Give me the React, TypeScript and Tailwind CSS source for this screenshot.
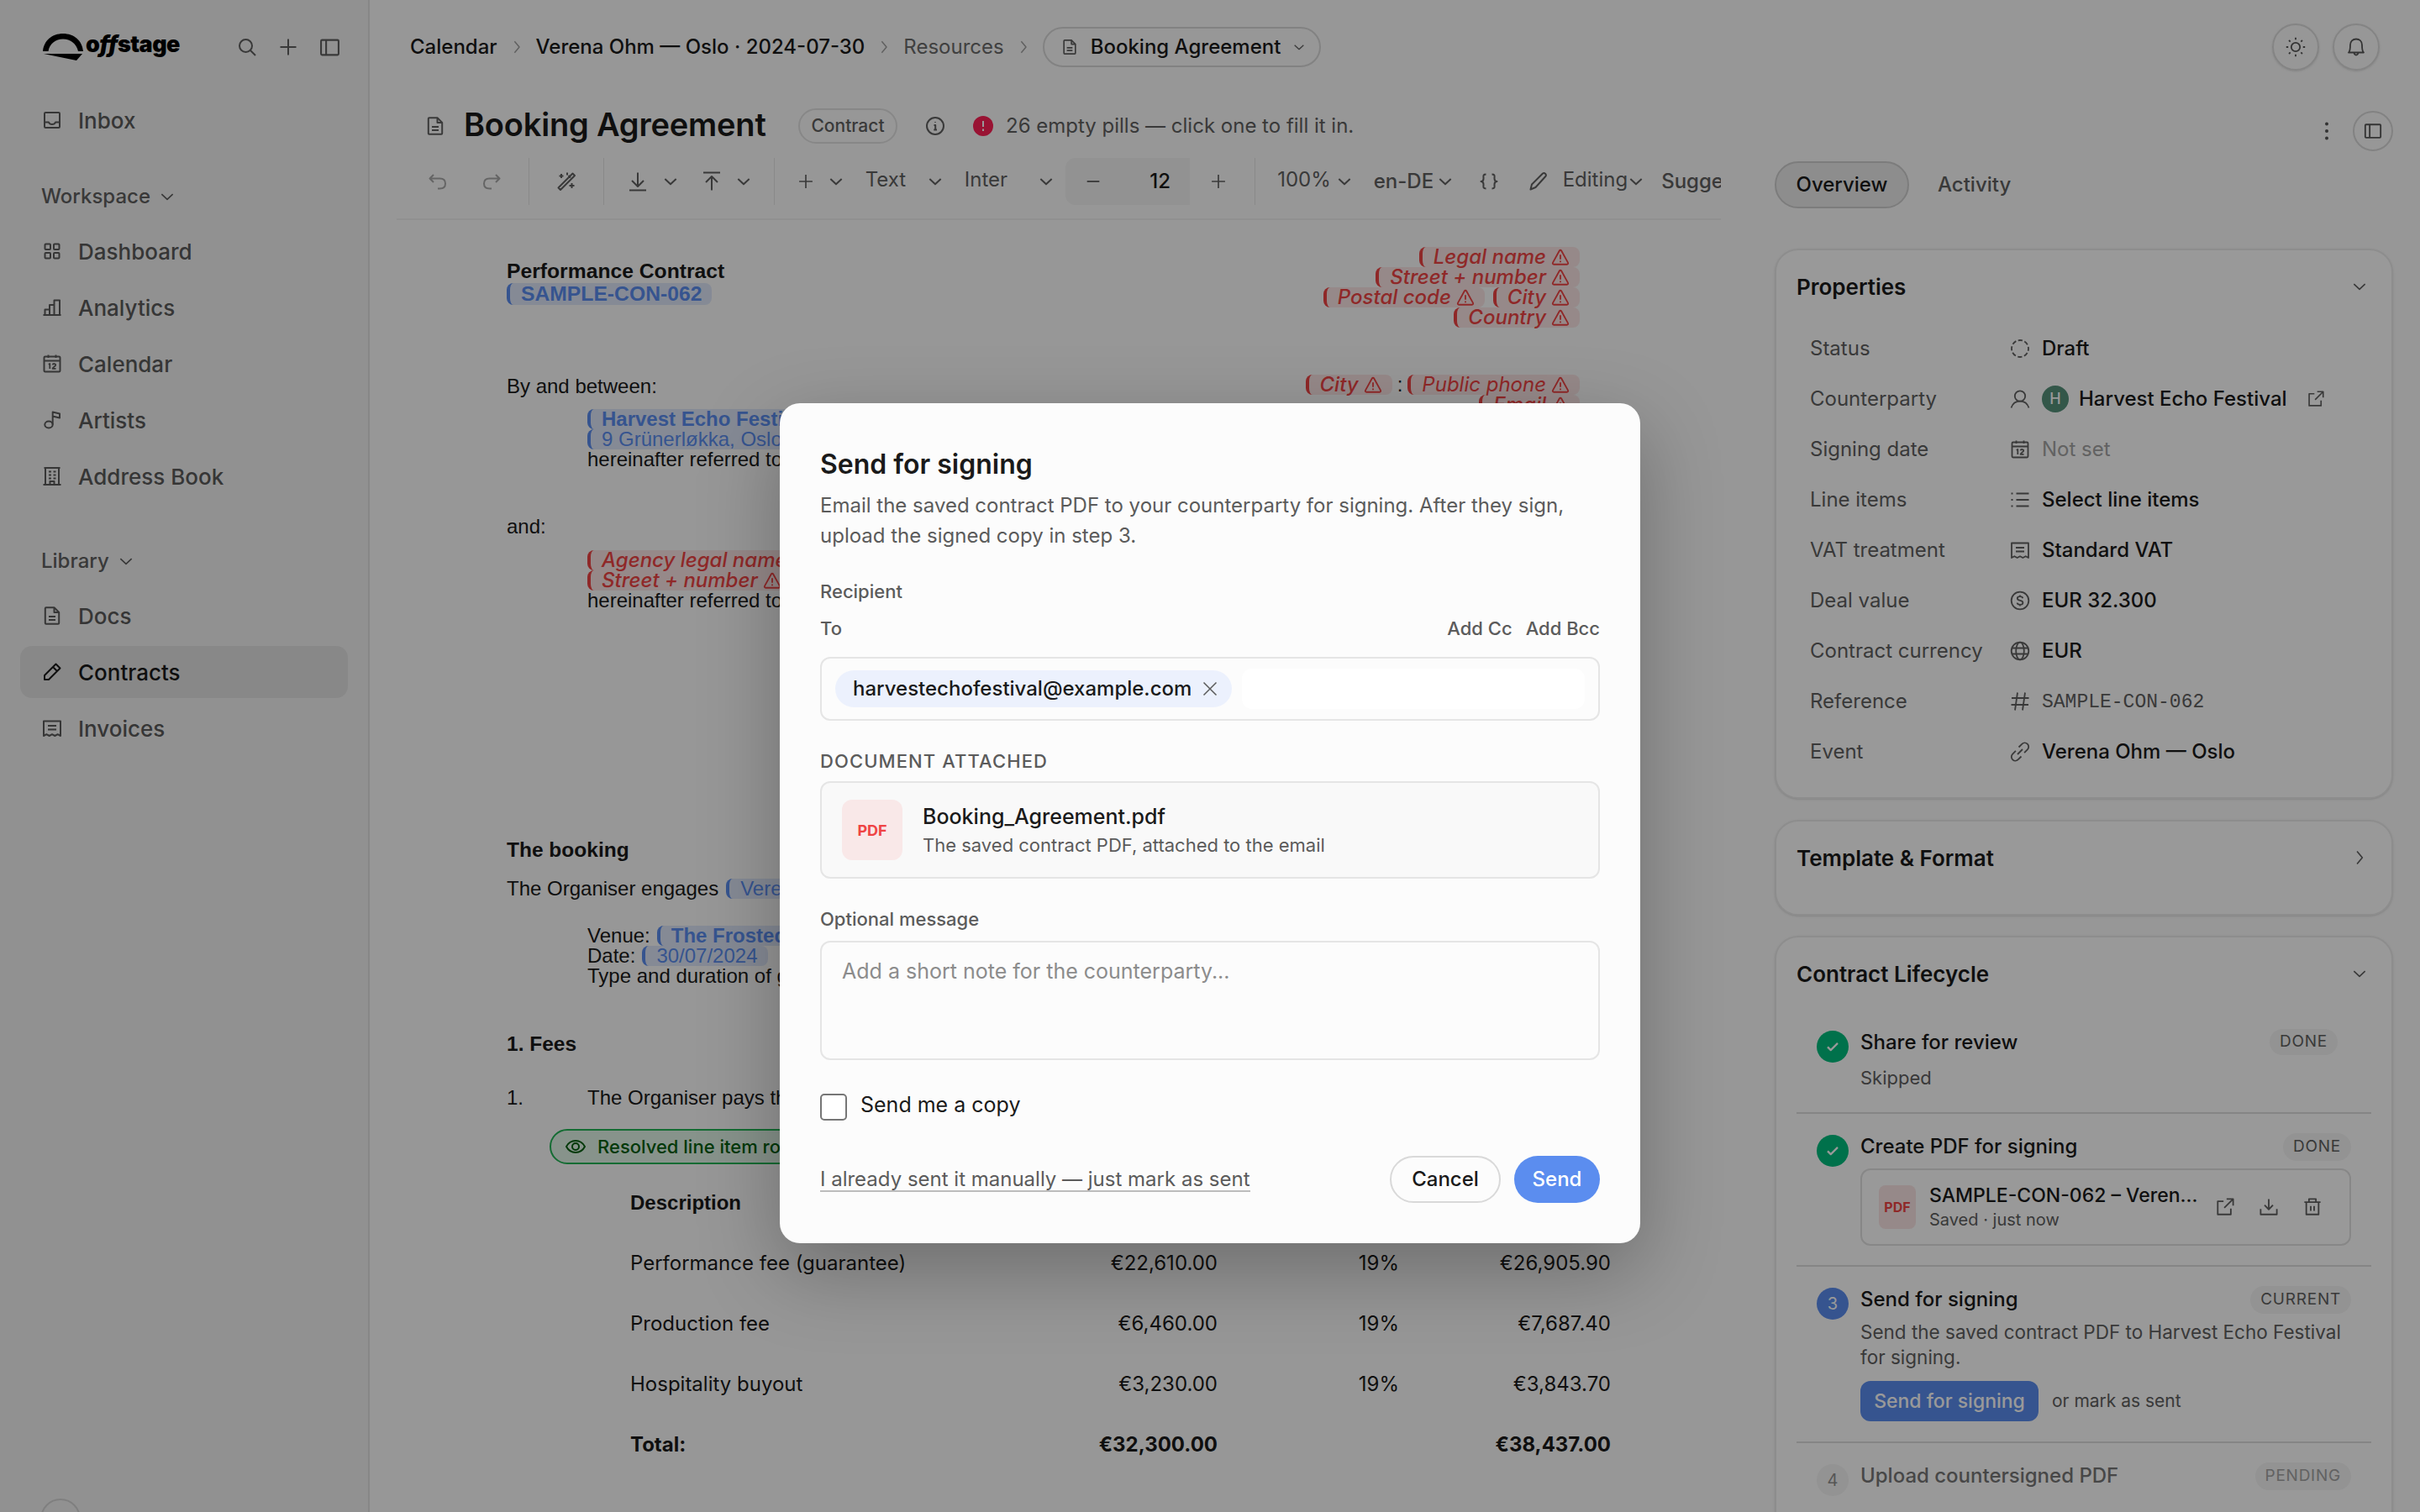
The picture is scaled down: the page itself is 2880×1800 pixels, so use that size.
import React from 'react';

interface IconProps {
    name: string;
    className?: string;
    stroke?: number;
}

const icons: Record<string, React.ReactNode> = {
    search: <><circle cx="10.5" cy="10.5" r="7.5"/><path d="m16 16 6 6"/></>,
    plus: <path d="M12 2.5v19M2.5 12h19"/>,
    minus: <path d="M4 12h16"/>,
    panel: <><rect x="2" y="3.5" width="20" height="17" rx="1.2"/><path d="M7.8 3.5v17"/></>,
    inbox: <><rect x="3" y="3" width="18" height="18" rx="1.2"/><path d="M3 14.5h5c.6 1.6 2 2.6 4 2.6s3.400-1 4-2.600h5"/></>,
    chevronDown: <path d="m4 8.500 8 7.500 8-7.500"/>,
    chevronRight: <path d="m8.500 3 7.500 9-7.500 9"/>,
    dashboard: <><rect x="3.500" y="3.500" width="6.500" height="6.500" rx="1"/><rect x="14" y="3.500" width="6.500" height="6.500" rx="1"/><rect x="3.500" y="14" width="6.500" height="6.500" rx="1"/><rect x="14" y="14" width="6.500" height="6.500" rx="1"/></>,
    chart: <path d="M1.500 21h21M3.500 21v-6.500h5.500M9 21V9h5.500M14.500 21V3.500H21V21"/>,
    calendar: <><rect x="2.500" y="3.500" width="19" height="18" rx="1.200"/><path d="M2.500 8.500h19M7.500 1.500v3.500M16.500 1.500v3.500"/><path d="M7.700 12.800 9.300 12v6M12.600 13.300c.3-1.700 3.700-1.800 3.600.3-.1 1.500-3.600 2.600-3.600 4.200h3.900" strokeWidth="1.800"/></>,
    note: <><ellipse cx="8" cy="17.500" rx="4.700" ry="4"/><path d="M12.700 17.500V2.500l8.300 2v5l-8.300-2"/></>,
    building: <path d="M1.500 22h21M4 22V2M20 22V2M2.500 2h19M8 6.500h3M8 10.500h3M8 14.500h3M13.500 6.500h3M13.500 10.500h3M13.500 14.500h3M9.500 22v-4h5v4"/>,
    doc: <><path d="M3.800 3.200c0-.6.400-1 1-1h9.700l5.700 5.700v12.900c0 .6-.4 1-1 1H4.800c-.6 0-1-.4-1-1z"/><path d="M14.500 2.200v5.700h5.700M8 13h8M8 17h8"/></>,
    pencil: <path d="M3 21v-5L16.500 2.500l5 5L8 21zM13 6l5 5"/>,
    penSlim: <path d="M2.500 21.500 4 15.500 17 2.500c1-.8 2-.7 3 .2s1.300 2.200.3 3.300L8.500 19z"/>,
    receipt: <><path d="M2 3.500h20v17.500l-3.300-1.800-3.400 1.800-3.300-1.800-3.300 1.800-3.400-1.800L2 21z"/><path d="M7 9h10M7 13.500h10"/></>,
    undo: <path d="M7 4 2.500 8.500 7 13M2.500 8.500h12c4 0 6.500 2.300 6.500 6s-2.500 6-6.500 6H12"/>,
    redo: <path d="m17 4 4.500 4.500L17 13M21.500 8.500h-12c-4 0-6.500 2.300-6.500 6s2.500 6 6.500 6H12"/>,
    wand: <path d="M2.500 19.500 19.500 2.500l2.500 2.500L5 22zM6 3v5M3.500 5.500h5M13 1.500v3M18.500 14v6M15.500 17h6M17 7.500 14.500 5"/>,
    toBottom: <path d="M12 1.500v16.500M5 11l7 7 7-7M2 22.500h20"/>,
    toTop: <path d="M12 22.500V6M5 13l7-7 7 7M2 1.500h20"/>,
    braces: <path d="M8.500 3.500c-4 0-3 2-3 5 0 2-1 3.500-3 3.500 2 0 3 1.500 3 3.500 0 3-1 5 3 5M15.500 3.500c4 0 3 2 3 5 0 2 1 3.500 3 3.500-2 0-3 1.500-3 3.500 0 3 1 5-3 5"/>,
    sun: <><circle cx="12" cy="12" r="5.200"/><path d="M12 .8v2.400M12 20.800v2.400M.8 12h2.400M20.800 12h2.400M4 4l1.700 1.700M18.300 18.300 20 20M4 20l1.700-1.700M18.300 5.700 20 4"/></>,
    bell: <path d="M3 18.500c2-1.500 2-4 2-9 0-4.300 3-7 7-7s7 2.700 7 7c0 5 0 7.500 2 9zM9.500 18.500c.2 1.800 1 3 2.500 3s2.300-1.200 2.500-3"/>,
    info: <><circle cx="12" cy="12" r="10"/><path d="M10.500 11h1.700v5.500M10.300 16.500h3.700M12 7v.8"/></>,
    dashed: <circle cx="12" cy="12" r="10" strokeDasharray="5.300 2.550" strokeDashoffset="2.600"/>,
    user: <><circle cx="12" cy="8.500" r="6.200"/><path d="M1.500 22.500c1.500-4.500 5.500-7.800 10.500-7.800s9 3.300 10.500 7.800"/></>,
    list: <path d="M7.500 4.500h15M7.500 12h15M7.500 19.500h15M1.500 4.500h2M1.500 12h2M1.500 19.500h2"/>,
    dollar: <><circle cx="12" cy="12" r="10.300"/><path d="M15.300 9.200c-.3-1.300-1.500-2-3.300-2s-3.200.9-3.200 2.300c0 3.300 6.600 1.500 6.600 4.900 0 1.500-1.500 2.400-3.400 2.400s-3.200-.8-3.500-2.200M12 5.500v1.700M12 16.800v1.700"/></>,
    globe: <><circle cx="12" cy="12" r="10.300"/><ellipse cx="12" cy="12" rx="4.800" ry="10.300"/><path d="M2.500 8.500h19M2.500 15.500h19"/></>,
    hash: <path d="M9 1.500 6 22.500M18 1.500l-3 21M2 8h20.500M1.500 16H22"/>,
    link: <path d="m9 15 6-6M10.500 6.500l3.700-3.700c2-2 4.800-1.800 6.600-.1s2 4.700 0 6.700l-3.700 3.700M13.500 17.500l-3.700 3.700c-2 2-4.800 1.800-6.600.1s-2-4.700 0-6.700l3.700-3.700"/>,
    external: <path d="M10 4.500H2.500v17h17V14M14 1.500h8.500V10M22.500 1.500 11 13"/>,
    download: <path d="M12 1.500V15M6.500 9.500 12 15l5.500-5.500M1.500 14.500v7h21v-7"/>,
    trash: <path d="M1.500 5.500h21M4 5.500v16h16v-16M7.500 5.500V1.500h9v4M9.800 10.500v6.500M14.200 10.500v6.500"/>,
    eye: <><path d="M1 12c2.500-4.700 6.300-7 11-7s8.500 2.300 11 7c-2.500 4.700-6.300 7-11 7s-8.500-2.300-11-7z"/><circle cx="12" cy="12" r="4"/></>,
    close: <path d="m3 3 18 18M21 3 3 21"/>,
    check: <path d="m4 12.500 5 5L20 6.500"/>,
    warning: <><path d="M12 3c.6 0 1 .3 1.300.8l8.500 15.400c.6 1.200 0 2.300-1.300 2.300h-17c-1.300 0-1.900-1.100-1.300-2.300L10.700 3.800C11 3.300 11.400 3 12 3z"/><path d="M12 9v6M12 17v1.800"/></>,
};

const Icon = ({name, className = "size-6", stroke = 2}: IconProps) => (
    <svg viewBox="0 0 24 24" fill="none" stroke="currentColor" strokeWidth={stroke} strokeLinejoin="round"
         className={`shrink-0 overflow-visible ${className}`}>
        {icons[name]}
    </svg>
);

const workspaceItems = [
    {icon: "dashboard", label: "Dashboard"},
    {icon: "chart", label: "Analytics"},
    {icon: "calendar", label: "Calendar"},
    {icon: "note", label: "Artists"},
    {icon: "building", label: "Address Book"},
];

const libraryItems = [
    {icon: "doc", label: "Docs"},
    {icon: "pencil", label: "Contracts", active: true},
    {icon: "receipt", label: "Invoices"},
];

interface NavItemProps {
    icon: string;
    label: string;
    active?: boolean;
}

const NavItem = ({icon, label, active}: NavItemProps) => (
    <div className={`flex h-[62px] items-center gap-[19px] rounded-[14px] pl-[26px] text-[26px] font-medium ${active ? "bg-[#e3e3e3] text-[#1a1a1a]" : "text-[#5a5a5a]"}`}>
        <Icon name={icon}/>
        <span>{label}</span>
    </div>
);

const NavHeading = ({label}: {label: string}) => (
    <div className="flex h-10 items-center gap-[10px] pl-[25px] text-2xl font-medium text-[#5f5f5f]">
        <span>{label}</span>
        <Icon name="chevronDown" className="size-[20px]"/>
    </div>
);

const Sidebar = () => (
    <aside className="flex h-[1800px] w-[440px] shrink-0 flex-col border-r-2 border-[#e2e2e2] bg-[#f2f2f2] px-6">
        <div className="flex h-[112px] items-center pl-[27px] text-[#5f5f5f]">
            <div className="flex items-center gap-[3px] text-black">
                <svg viewBox="0 0 48 33" className="h-[33px] w-12" fill="currentColor">
                    <path d="M0 21C1 8.500 11 0 24 0s23 8.500 24 21h-6C40 12 33 6.500 24 6.500S8 12 6.500 21zM1 24h46l-7 8z"/>
                </svg>
                <span className="-mt-2 text-[27px] leading-none font-black tracking-[-0.02em]">o<i>ff</i>stage</span>
            </div>
            <div className="ml-auto flex items-center gap-[25px] pr-[9px]">
                <Icon name="search"/>
                <Icon name="plus"/>
                <Icon name="panel" className="size-[25px]"/>
            </div>
        </div>
        <NavItem icon="inbox" label="Inbox"/>
        <div className="mt-10"><NavHeading label="Workspace"/></div>
        <div className="mt-[14px] flex flex-col gap-[5px]">
            {workspaceItems.map((item) => <NavItem key={item.label} {...item}/>)}
        </div>
        <div className="mt-[50px]"><NavHeading label="Library"/></div>
        <div className="mt-[14px] flex flex-col gap-[5px]">
            {libraryItems.map((item) => <NavItem key={item.label} {...item}/>)}
        </div>
        <div className="mt-auto -mb-8 ml-6 flex size-12 shrink-0 items-center justify-center rounded-full border-2 border-[#d4d4d4] text-[22px] font-bold text-[#1a1a1a]">?</div>
    </aside>
);

const TopBar = () => (
    <header className="flex h-[112px] shrink-0 items-center pr-[48px] pl-[48px] text-2xl font-medium text-[#1a1a1a]">
        <span>Calendar</span>
        <Icon name="chevronRight" className="mx-[14px] size-[18px] text-[#a0a0a0]"/>
        <span>Verena Ohm — Oslo · 2024-07-30</span>
        <Icon name="chevronRight" className="mx-[14px] size-[18px] text-[#a0a0a0]"/>
        <span className="font-normal text-[#6b6b6b]">Resources</span>
        <Icon name="chevronRight" className="mx-[14px] size-[18px] text-[#a0a0a0]"/>
        <div className="flex h-12 items-center rounded-full border-2 border-[#d9d9d9] pr-4 pl-5">
            <Icon name="doc" className="size-5 text-[#606060]"/>
            <span className="ml-[15px]">Booking Agreement</span>
            <Icon name="chevronDown" className="ml-[14px] size-4 text-[#606060]"/>
        </div>
        <div className="ml-auto flex gap-4 text-[#555]">
            <div className="flex size-14 items-center justify-center rounded-full border-2 border-[#dcdcdc] shadow-sm"><Icon name="sun" stroke={1.8}/></div>
            <div className="flex size-14 items-center justify-center rounded-full border-2 border-[#dcdcdc] shadow-sm"><Icon name="bell" stroke={1.8}/></div>
        </div>
    </header>
);

const Caret = ({className = ""}: {className?: string}) => (
    <Icon name="chevronDown" className={`size-5 ${className}`} stroke={2.4}/>
);

const Toolbar = () => (
    <div className="ml-8 flex h-[74px] items-start overflow-hidden border-b-2 border-[#f0f0f0] text-2xl text-[#606060]">
        <div className="flex h-14 w-[1600px] shrink-0 items-center">
            <Icon name="undo" className="ml-[37px] size-6 text-[#a8a8a8]"/>
            <Icon name="redo" className="ml-10 size-6 text-[#a8a8a8]"/>
            <div className="ml-[32px] h-14 w-px bg-[#e4e4e4]"/>
            <Icon name="wand" className="ml-8 size-6"/>
            <div className="ml-8 h-14 w-px bg-[#e4e4e4]"/>
            <Icon name="toBottom" className="ml-7 size-6"/>
            <Caret className="ml-[17px]"/>
            <Icon name="toTop" className="ml-[27px] size-6"/>
            <Caret className="ml-4"/>
            <div className="ml-[26px] h-14 w-px bg-[#e4e4e4]"/>
            <Icon name="plus" className="ml-[27px] size-5"/>
            <Caret className="ml-4"/>
            <span className="-mt-[5px] ml-[25px] w-[82px]">Text</span>
            <Caret/>
            <span className="-mt-[5px] ml-[25px] w-[98px]">Inter</span>
            <Caret/>
            <div className="ml-[13px] flex h-14 w-[166px] items-center rounded-l-[12px] bg-[#f3f3f3]">
                <Icon name="minus" className="ml-[22px] size-[22px]"/>
                <span className="ml-[56px] font-medium text-[#1a1a1a]">12</span>
            </div>
            <Icon name="plus" className="ml-6 size-5"/>
            <div className="ml-[33px] h-14 w-px bg-[#e4e4e4]"/>
            <span className="-mt-[5px] ml-[26px] w-[78px]">100%</span>
            <Caret/>
            <span className="ml-[25px] w-[84px] font-medium">en-DE</span>
            <Caret/>
            <Icon name="braces" className="ml-[30px] size-6"/>
            <Icon name="penSlim" className="ml-[35px] size-6"/>
            <span className="-mt-[5px] ml-[17px] w-[85px]">Editing</span>
            <Caret/>
            <span className="ml-[20px] font-medium">Suggest</span>
        </div>
    </div>
);

interface PillProps {
    children: React.ReactNode;
    red?: boolean;
    className?: string;
}

const Pill = ({children, red, className = "h-6"}: PillProps) => (
    <span className={`inline-flex items-center rounded-[8px] border-l-[4px] pr-3 pl-[13px] align-top whitespace-nowrap ${red ? "border-[#ef4444] bg-[#ef4444]/12 font-[Inter] font-medium text-[#ef4444] italic" : "border-[#5b8def] bg-[#5b8def]/18 text-[#5b8def]"} ${className}`}>
        {children}
        {red && <Icon name="warning" className="ml-[6px] size-[22px]"/>}
    </span>
);

const feeRows = [
    {label: "Performance fee (guarantee)", net: "€22,610.00", vat: "19%", gross: "€26,905.90"},
    {label: "Production fee", net: "€6,460.00", vat: "19%", gross: "€7,687.40"},
    {label: "Hospitality buyout", net: "€3,230.00", vat: "19%", gross: "€3,843.70"},
    {label: "Total:", net: "€32,300.00", vat: "", gross: "€38,437.00", bold: true},
];

const Contract = () => (
    <article className="pl-[163px] font-['Liberation_Sans',Arial,sans-serif] text-2xl leading-6 text-[#1a1a1a]">
        <div className="flex h-[738px] w-[1277px] justify-between">
            <div className="pt-[47px]">
                <div className="text-[24.700px] leading-7 font-bold">Performance Contract</div>
                <div className="h-7 text-[24.700px] leading-7 font-bold"><Pill className="h-[26px]">SAMPLE-CON-062</Pill></div>
                <div className="mt-[83px]">By and between:</div>
                <div className="mt-[15px] pl-24 whitespace-nowrap">
                    <div className="h-6 font-bold"><Pill>Harvest Echo Festival</Pill></div>
                    <div className="h-6"><Pill>9 Grünerløkka, Oslo</Pill></div>
                    <div>hereinafter referred to as “Organiser”</div>
                </div>
                <div className="mt-14">and:</div>
                <div className="mt-4 pl-24 whitespace-nowrap">
                    <div className="h-6"><Pill red className="h-6 font-bold">Agency legal name</Pill></div>
                    <div className="h-6"><Pill red>Street + number</Pill></div>
                    <div>hereinafter referred to as “Agency”</div>
                </div>
            </div>
            <div className="flex flex-col items-end pt-8">
                <Pill red>Legal name</Pill>
                <Pill red>Street + number</Pill>
                <div className="flex h-6 gap-[10px]"><Pill red>Postal code</Pill><Pill red>City</Pill></div>
                <Pill red>Country</Pill>
                <div className="mt-14 flex h-6 gap-[6px]"><Pill red>City</Pill>:<Pill red className="h-6 font-normal">Public phone</Pill></div>
                <Pill red>Email</Pill>
            </div>
        </div>
        <div className="text-[24.500px] font-bold">The booking</div>
        <div className="mt-[22px] flex h-6 gap-[9px]">The Organiser engages <Pill>Verena Ohm</Pill></div>
        <div className="mt-8 pl-24">
            <div className="flex h-6 gap-2">Venue: <Pill className="h-6 font-bold">The Frosted Hall</Pill></div>
            <div className="flex h-6 gap-2">Date: <Pill>30/07/2024</Pill></div>
            <div>Type and duration of gig: live</div>
        </div>
        <div className="mt-[57px] text-[24.500px] font-bold">1. Fees</div>
        <div className="mt-10 flex"><span className="w-24">1.</span><span>The Organiser pays the Agency</span></div>
        <div className="mt-[25px] ml-[51px] flex h-[42px] w-[520px] items-center gap-[14px] rounded-full border-2 border-[#22b455] bg-[#22c55e]/12 pl-[17px] font-[Inter] text-[22px] font-medium text-[#046010]">
            <Icon name="eye"/>
            <span>Resolved line item rows</span>
        </div>
        <div className="mt-[10px] ml-[147px] flex w-[1167px] flex-col font-[Inter]">
            <div className="flex h-[72px] items-center font-['Liberation_Sans'] font-bold">Description</div>
            {
                feeRows.map((row) => (
                    <div key={row.label} className={`flex h-[72px] items-center ${row.bold ? "font-bold" : ""}`}>
                        <span className="w-[480px]">{row.label}</span>
                        <span className="w-[219px] text-right">{row.net}</span>
                        <span className="w-[216px] text-right">{row.vat}</span>
                        <span className="w-[252px] text-right">{row.gross}</span>
                    </div>
                ))
            }
        </div>
    </article>
);

const Document = () => (
    <section className="w-[1608px] shrink-0">
        <div className="flex h-[76px] items-center pl-[66px] text-2xl text-[#606060]">
            <Icon name="doc"/>
            <h1 className="-mt-1 ml-[22px] w-[364px] text-[38px] leading-none font-semibold tracking-[-0.005em] whitespace-nowrap text-[#1a1a1a]">Booking Agreement</h1>
            <span className="ml-[34px] flex h-[42px] w-[118px] items-center justify-center rounded-full border-2 border-[#e2e2e2] text-[21px] font-medium">Contract</span>
            <Icon name="info" className="ml-[33px] size-6"/>
            <span className="ml-[33px] flex size-6 items-center justify-center rounded-full bg-[#ff2056]">
                <svg viewBox="0 0 24 24" className="size-6"><path d="M12 6v7M12 15.500v2.500" stroke="white" strokeWidth="2"/></svg>
            </span>
            <span className="ml-[15px]">26 empty pills — click one to fill it in.</span>
        </div>
        <Toolbar/>
        <Contract/>
    </section>
);

const properties: {label: string; icon: string; value: React.ReactNode}[] = [
    {label: "Status", icon: "dashed", value: "Draft"},
    {
        label: "Counterparty", icon: "user", value: (
            <span className="flex items-center">
                <span className="mr-3 flex size-8 items-center justify-center rounded-full bg-[#55917a] text-lg text-white">H</span>
                Harvest Echo Festival
                <Icon name="external" className="ml-6 size-5 text-[#606060]"/>
            </span>
        )
    },
    {label: "Signing date", icon: "calendar", value: <span className="font-normal text-[#a3a3a3]">Not set</span>},
    {label: "Line items", icon: "list", value: "Select line items"},
    {label: "VAT treatment", icon: "receipt", value: "Standard VAT"},
    {label: "Deal value", icon: "dollar", value: "EUR 32.300"},
    {label: "Contract currency", icon: "globe", value: "EUR"},
    {label: "Reference", icon: "hash", value: <span className="font-['Liberation_Mono',monospace] text-[23px] font-normal text-[#606060]">SAMPLE-CON-062</span>},
    {label: "Event", icon: "link", value: "Verena Ohm — Oslo"},
];

const Card = ({title, open = true, className, children}: {title: string; open?: boolean; className: string; children?: React.ReactNode}) => (
    <div className={`rounded-[28px] border-2 border-[#ececec] bg-white px-6 shadow-sm ${className}`}>
        <div className="flex h-[86px] items-center justify-between pr-1">
            <h2 className="text-[26px] font-semibold text-[#1a1a1a]">{title}</h2>
            <Icon name={open ? "chevronDown" : "chevronRight"} className="size-5 text-[#606060]"/>
        </div>
        {children}
    </div>
);

interface StepProps {
    marker: React.ReactNode;
    title: string;
    badge: string;
    className: string;
    badgeClassName?: string;
    children?: React.ReactNode;
}

const Step = ({marker, title, badge, className, badgeClassName = "h-[33px]", children}: StepProps) => (
    <div className={`flex pt-[23px] pr-6 pl-6 ${className}`}>
        <div className="mt-[2px]">{marker}</div>
        <div className="ml-[14px] flex-1">
            <div className="flex justify-between">
                <span className="mt-px text-2xl leading-[30px] font-medium">{title}</span>
                <span className={`flex items-center rounded-full bg-[#f5f5f5] px-3 text-[19px] tracking-[0.04em] text-[#606060] ${badgeClassName}`}>{badge}</span>
            </div>
            {children}
        </div>
    </div>
);

const DoneMarker = () => (
    <div className="flex size-[38px] items-center justify-center rounded-full bg-[#00bc7d] text-white">
        <Icon name="check" className="size-[18px]" stroke={3}/>
    </div>
);

const RightPanel = () => (
    <aside className="w-[832px] pr-8 pl-16">
        <div className="flex h-20 items-center justify-end gap-7 pt-2 text-[#555]">
            <svg viewBox="0 0 6 24" className="h-6 w-1.5" fill="currentColor">
                <circle cx="3" cy="3.500" r="2"/><circle cx="3" cy="12" r="2"/><circle cx="3" cy="20.500" r="2"/>
            </svg>
            <div className="flex size-12 items-center justify-center rounded-full border-2 border-[#d9d9d9]">
                <Icon name="panel" className="size-[22px]"/>
            </div>
        </div>
        <div className="flex h-14 items-center gap-[34px] text-2xl font-medium text-[#606060]">
            <span className="flex h-14 w-40 items-center justify-center rounded-full border-2 border-[#cfcfcf] bg-[#ececec] text-[#1a1a1a]">Overview</span>
            <span>Activity</span>
        </div>
        <Card title="Properties" className="mt-12 h-[655px]">
            <div className="mt-[1px]">
                {
                    properties.map((property) => (
                        <div key={property.label} className="flex h-[60px] items-center pl-4 text-2xl text-[#606060]">
                            <span className="w-[238px]">{property.label}</span>
                            <Icon name={property.icon} stroke={1.800}/>
                            <span className="ml-[14px] font-medium text-[#1a1a1a]">{property.value}</span>
                        </div>
                    ))
                }
            </div>
        </Card>
        <Card title="Template & Format" open={false} className="mt-[25px] h-[114px]"/>
        <Card title="Contract Lifecycle" className="mt-6 h-[800px]">
            <div className="text-[#1a1a1a]">
                <Step marker={<DoneMarker/>} title="Share for review" badge="DONE" badgeClassName="mr-4 h-[31px]" className="h-[122px]">
                    <div className="mt-3 text-[22px] leading-[30px] text-[#606060]">Skipped</div>
                </Step>
                <Step marker={<DoneMarker/>} title="Create PDF for signing" badge="DONE" className="h-[182px] border-t-2 border-[#dedede]">
                    <div className="mt-[9px] flex h-[92px] items-center rounded-[12px] border-2 border-[#e2e2e2] pl-5 text-[#606060]">
                        <div className="flex h-[52px] w-11 items-center justify-center rounded-[8px] bg-[#fbe5e5] text-base font-bold text-[#ef4444]">PDF</div>
                        <div className="ml-4 w-[341px]">
                            <div className="text-[23px] leading-[30px] font-medium text-[#1a1a1a]">SAMPLE-CON-062 – Veren…</div>
                            <div className="text-[20px] leading-[28px]">Saved · just now</div>
                        </div>
                        <Icon name="external" className="size-[22px]"/>
                        <Icon name="download" className="ml-[30px] size-[22px]"/>
                        <Icon name="trash" className="ml-[30px] size-[22px]"/>
                    </div>
                </Step>
                <Step marker={<div className="flex size-[38px] items-center justify-center rounded-full bg-[#5b8def] text-xl text-white">3</div>}
                      title="Send for signing" badge="CURRENT" className="h-[210px] border-t-2 border-[#dedede]">
                    <div className="mt-[7px] text-[22.500px] leading-[30px] whitespace-nowrap text-[#606060]">Send the saved contract PDF to Harvest Echo Festival<br/>for signing.</div>
                    <div className="mt-[13px] flex items-center gap-4 text-[21px] text-[#606060]">
                        <span className="flex h-12 w-[212px] items-center justify-center rounded-[12px] bg-[#5b8def] text-[23px] font-medium text-white">Send for signing</span>
                        <span>or mark as sent</span>
                    </div>
                </Step>
                <Step marker={<div className="flex size-[38px] items-center justify-center rounded-full bg-[#f5f5f5] text-xl text-[#909090]">4</div>}
                      title="Upload countersigned PDF" badge="PENDING" badgeClassName="h-[33px] text-[#a3a3a3]" className="h-[120px] border-t-2 border-[#dedede] text-[#777]"/>
            </div>
        </Card>
    </aside>
);

const SendDialog = () => (
    <div className="absolute inset-0 flex items-start justify-center bg-black/40 pt-[480px]">
        <div className="flex h-[1000px] w-[1024px] flex-col rounded-[24px] bg-[#fcfcfc] px-12 pt-[50px] text-[#5b5b5b] shadow-[0_32px_96px_rgba(0,0,0,0.28)]">
            <h2 className="text-[32px] leading-[46px] font-semibold text-[#1a1a1a]">Send for signing</h2>
            <p className="mt-[8px] text-2xl leading-9">Email the saved contract PDF to your counterparty for signing. After they sign, upload the signed copy in step 3.</p>
            <div className="mt-8 text-[22px] leading-8 font-medium">Recipient</div>
            <div className="mt-3 flex gap-4 text-[22px] leading-8 font-medium">
                <span className="mr-auto">To</span>
                <span>Add Cc</span>
                <span>Add Bcc</span>
            </div>
            <div className="mt-[18px] flex h-[76px] items-center rounded-[12px] border-2 border-[#e5e5e5] px-4">
                <div className="flex h-11 w-[472px] items-center justify-between rounded-full bg-[#ecf1fd] pr-4 pl-[21px] text-2xl font-medium text-[#1a1a1a]">
                    <span>harvestechofestival@example.com</span>
                    <Icon name="close" className="size-5 text-[#5b5b5b]" stroke={1.800}/>
                </div>
                <div className="ml-3 h-12 flex-1 rounded-[12px] bg-white"/>
            </div>
            <div className="mt-8 text-[22px] leading-8 font-medium tracking-[0.05em]">DOCUMENT ATTACHED</div>
            <div className="mt-2 flex h-[116px] items-center rounded-[12px] border-2 border-[#e5e5e5] bg-[#f9f9f9] pl-6">
                <div className="flex size-[72px] items-center justify-center rounded-[12px] bg-[#f9e8e8] pt-0.5 text-lg font-bold text-[#ef4444]">PDF</div>
                <div className="ml-6">
                    <div className="text-[25px] leading-9 font-medium text-[#1a1a1a]">Booking_Agreement.pdf</div>
                    <div className="text-[22px] leading-[33px]">The saved contract PDF, attached to the email</div>
                </div>
            </div>
            <div className="mt-8 text-[22px] leading-8 font-medium">Optional message</div>
            <div className="mt-[10px] h-[142px] rounded-[12px] border-2 border-[#e5e5e5] px-6 pt-4 text-[25px] leading-9 text-[#8c8c8c]">Add a short note for the counterparty...</div>
            <div className="mt-10 flex h-8 items-center gap-4 text-[25px] text-[#1a1a1a]">
                <span className="size-8 rounded-[5px] border-2 border-[#767676] bg-white"/>
                <span className="-mt-1">Send me a copy</span>
            </div>
            <div className="mt-[42px] flex h-14 items-center text-2xl">
                <span className="mr-auto border-b-2 border-[#bcbcbc] leading-[27px]">I already sent it manually — just mark as sent</span>
                <span className="flex h-14 w-[132px] items-center justify-center rounded-full border-2 border-[#d9d9d9] font-medium text-[#1a1a1a]">Cancel</span>
                <span className="ml-4 flex h-14 w-[102px] items-center justify-center rounded-full bg-[#5b8def] font-medium text-white">Send</span>
            </div>
        </div>
    </div>
);

const App = () => (
    <div className="relative flex h-[1800px] w-[2880px] overflow-hidden bg-[#fcfcfc] font-[Inter,sans-serif]">
        <Sidebar/>
        <main className="flex min-w-0 flex-1 flex-col">
            <TopBar/>
            <div className="flex">
                <Document/>
                <RightPanel/>
            </div>
        </main>
        <SendDialog/>
    </div>
);

export default App;
